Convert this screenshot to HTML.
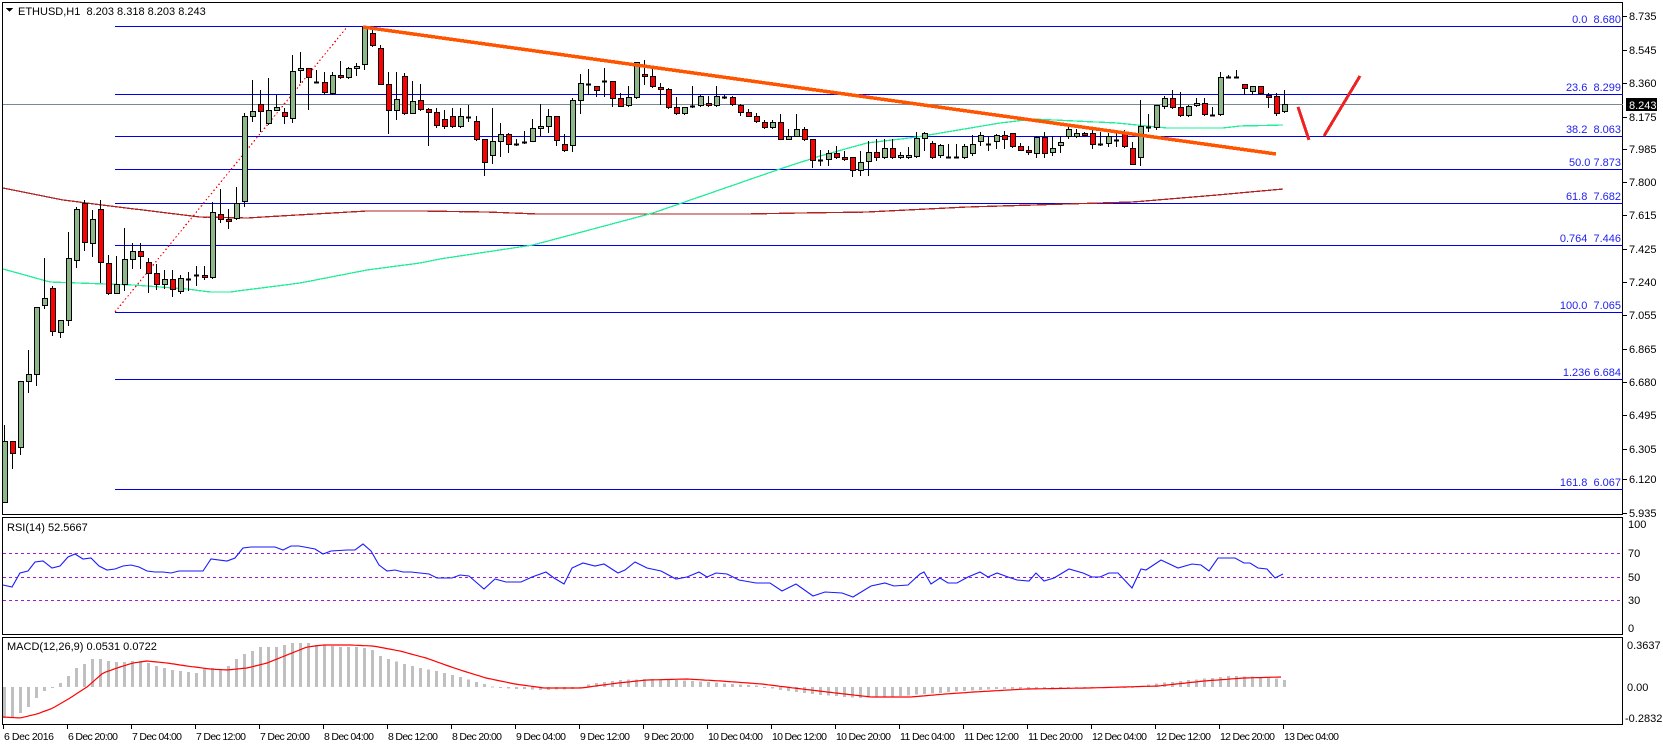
<!DOCTYPE html>
<html><head><meta charset="utf-8">
<style>
html,body{margin:0;padding:0;background:#fff;}
svg{display:block;font-family:"Liberation Sans",sans-serif;font-size:11px;}
.pre text{white-space:pre;}
</style></head><body>
<svg id="s" width="1663" height="746" viewBox="0 0 1663 746" xmlns="http://www.w3.org/2000/svg" shape-rendering="crispEdges">
<rect x="0" y="0" width="1663" height="746" fill="#fff"/>
<rect x="2.5" y="2.5" width="1620" height="512" fill="none" stroke="#000"/>
<rect x="2.5" y="517.5" width="1620" height="117" fill="none" stroke="#000"/>
<rect x="2.5" y="637.5" width="1620" height="87" fill="none" stroke="#000"/>
<g stroke="#0000e6" stroke-width="1.2">
<line x1="115" y1="26.5" x2="1623" y2="26.5"/>
<line x1="115" y1="94.5" x2="1623" y2="94.5"/>
<line x1="115" y1="136.5" x2="1623" y2="136.5"/>
<line x1="115" y1="169.5" x2="1623" y2="169.5"/>
<line x1="115" y1="203.5" x2="1623" y2="203.5"/>
<line x1="115" y1="245.5" x2="1623" y2="245.5"/>
<line x1="115" y1="312.5" x2="1623" y2="312.5"/>
<line x1="115" y1="379.5" x2="1623" y2="379.5"/>
<line x1="115" y1="489.5" x2="1623" y2="489.5"/>
</g>
<line x1="3" y1="104.5" x2="1623" y2="104.5" stroke="#778899"/>
<g fill="#2222ee" text-anchor="end" class="pre" xml:space="preserve">
<text x="1621" y="23">0.0  8.680</text>
<text x="1621" y="91">23.6  8.299</text>
<text x="1621" y="133">38.2  8.063</text>
<text x="1621" y="166">50.0 7.873</text>
<text x="1621" y="200">61.8  7.682</text>
<text x="1621" y="242">0.764  7.446</text>
<text x="1621" y="309">100.0  7.065</text>
<text x="1621" y="376">1.236 6.684</text>
<text x="1621" y="486">161.8  6.067</text>
</g>
<g id="ov"></g>
<polygon points="6,8 13,8 9.5,12" fill="#000"/>
<text x="18" y="15" fill="#000" class="pre" xml:space="preserve">ETHUSD,H1  8.203 8.318 8.203 8.243</text>
<g fill="#000">
<text x="1629" y="20">8.735</text>
<text x="1629" y="54">8.545</text>
<text x="1629" y="87">8.360</text>
<text x="1629" y="121">8.175</text>
<text x="1629" y="153">7.985</text>
<text x="1629" y="186">7.800</text>
<text x="1629" y="219">7.615</text>
<text x="1629" y="253">7.425</text>
<text x="1629" y="286">7.240</text>
<text x="1629" y="319">7.055</text>
<text x="1629" y="353">6.865</text>
<text x="1629" y="386">6.680</text>
<text x="1629" y="419">6.495</text>
<text x="1629" y="453">6.305</text>
<text x="1629" y="483">6.120</text>
<text x="1629" y="517">5.935</text>
</g>
<g stroke="#000">
<line x1="1623" y1="16.5" x2="1627" y2="16.5"/><line x1="1623" y1="50.5" x2="1627" y2="50.5"/><line x1="1623" y1="83.5" x2="1627" y2="83.5"/><line x1="1623" y1="117.5" x2="1627" y2="117.5"/><line x1="1623" y1="149.5" x2="1627" y2="149.5"/><line x1="1623" y1="182.5" x2="1627" y2="182.5"/><line x1="1623" y1="215.5" x2="1627" y2="215.5"/><line x1="1623" y1="249.5" x2="1627" y2="249.5"/><line x1="1623" y1="282.5" x2="1627" y2="282.5"/><line x1="1623" y1="315.5" x2="1627" y2="315.5"/><line x1="1623" y1="349.5" x2="1627" y2="349.5"/><line x1="1623" y1="382.5" x2="1627" y2="382.5"/><line x1="1623" y1="415.5" x2="1627" y2="415.5"/><line x1="1623" y1="449.5" x2="1627" y2="449.5"/><line x1="1623" y1="479.5" x2="1627" y2="479.5"/><line x1="1623" y1="513.5" x2="1627" y2="513.5"/>
</g>
<rect x="1626" y="98" width="31" height="13" fill="#000"/>
<text x="1629" y="109" fill="#fff">8.243</text>
<text x="7" y="531" fill="#000">RSI(14) 52.5667</text>
<g stroke="#9a1ed6" stroke-dasharray="3,3">
<line x1="3" y1="553.5" x2="1623" y2="553.5"/>
<line x1="3" y1="577.5" x2="1623" y2="577.5"/>
<line x1="3" y1="600.5" x2="1623" y2="600.5"/>
</g>
<g fill="#000">
<text x="1628" y="528">100</text>
<text x="1628" y="557">70</text>
<text x="1628" y="581">50</text>
<text x="1628" y="604">30</text>
<text x="1628" y="632">0</text>
<text x="7" y="650">MACD(12,26,9) 0.0531 0.0722</text>
<text x="1627" y="649">0.3637</text>
<text x="1627" y="691">0.00</text>
<text x="1625" y="722">-0.2832</text>
</g>
<g id="ind"></g>
<g fill="#000" font-size="10.5" lengthAdjust="spacingAndGlyphs">
<text x="4" y="740" textLength="50">6 Dec 2016</text>
<text x="68" y="740" textLength="50">6 Dec 20:00</text>
<text x="132" y="740" textLength="50">7 Dec 04:00</text>
<text x="196" y="740" textLength="50">7 Dec 12:00</text>
<text x="260" y="740" textLength="50">7 Dec 20:00</text>
<text x="324" y="740" textLength="50">8 Dec 04:00</text>
<text x="388" y="740" textLength="50">8 Dec 12:00</text>
<text x="452" y="740" textLength="50">8 Dec 20:00</text>
<text x="516" y="740" textLength="50">9 Dec 04:00</text>
<text x="580" y="740" textLength="50">9 Dec 12:00</text>
<text x="644" y="740" textLength="50">9 Dec 20:00</text>
<text x="708" y="740" textLength="55">10 Dec 04:00</text>
<text x="772" y="740" textLength="55">10 Dec 12:00</text>
<text x="836" y="740" textLength="55">10 Dec 20:00</text>
<text x="900" y="740" textLength="55">11 Dec 04:00</text>
<text x="964" y="740" textLength="55">11 Dec 12:00</text>
<text x="1028" y="740" textLength="55">11 Dec 20:00</text>
<text x="1092" y="740" textLength="55">12 Dec 04:00</text>
<text x="1156" y="740" textLength="55">12 Dec 12:00</text>
<text x="1220" y="740" textLength="55">12 Dec 20:00</text>
<text x="1284" y="740" textLength="55">13 Dec 04:00</text>
</g>
<g id="ticks" stroke="#000"></g>
<g id="cd"></g>
<g id="top"></g>
</svg>
<script>
var NS="http://www.w3.org/2000/svg";
function el(p,t,a){var e=document.createElementNS(NS,t);for(var k in a)e.setAttribute(k,a[k]);document.getElementById(p).appendChild(e);return e;}
for(var i=0;i<21;i++){var x=3.5+64*i;el("ticks","line",{x1:x,y1:725,x2:x,y2:729});}
var C=[
["G",441,502,425,502],["R",441,453,441,468],["G",381,447,405,454],["G",374,381,350,392],["G",307,374,355,385],["G",298,305,258,308],["R",288,331,286,335],["G",320,332,320,337],["G",258,320,232,325],["G",209,260,207,267],["R",203,242,200,250],["G",219,243,210,256],["R",209,262,200,282],["R",263,293,255,294],["G",284,293,256,293],["G",259,284,228,290],["G",251,259,243,268],["R",251,256,243,268],["R",262,273,258,292],["R",273,284,264,289],["G",279,284,270,288],["R",279,289,270,296],["G",278,291,275,293],["D",279,279,272,290],["D",275,275,266,285],["R",275,277,266,279],["G",212,277,202,278],["R",214,219,189,222],["R",219,221,209,228],["G",203,218,187,219],["G",116,201,113,206],["G",111,116,80,121],["R",104,111,90,131],["G",110,123,78,124],["G",107,110,95,110],["R",112,116,108,123],["G",71,118,55,122],["G",68,70,52,82],["R",68,77,68,109],["D",82,82,70,82],["R",82,92,72,94],["G",75,93,72,94],["R",75,77,61,78],["G",68,77,67,78],["G",66,68,63,75],["G",27,64,26,69],["R",33,45,28,46],["R",48,84,45,84],["R",84,110,72,133],["G",99,110,72,119],["R",76,113,73,114],["G",101,113,81,113],["R",100,109,84,110],
["R",109,112,108,145],["R",112,125,108,127],["R",119,126,110,128],["R",116,126,108,127],["G",116,126,108,127],["D",117,117,105,121],["R",121,139,116,140],["R",139,162,139,175],["G",141,155,108,163],["G",134,141,123,156],["R",134,144,133,152],["D",144,144,139,145],["D",142,142,131,143],["G",128,141,119,141],["G",126,128,104,135],["G",116,126,109,132],["R",116,140,116,145],["R",144,150,134,151],["G",100,145,98,151],["G",83,100,74,113],["D",84,84,69,94],["R",86,90,86,96],["D",81,81,68,96],["R",81,98,81,106],["R",98,106,93,106],["G",97,105,86,106],["G",62,97,62,98],["R",74,76,60,84],["R",76,86,68,87],["R",87,89,83,104],["R",89,107,88,108],["R",107,113,97,114],["G",107,113,107,114],["D",106,106,86,107],["G",96,105,95,106],["R",103,105,96,106],["G",96,105,86,106],["D",97,97,95,98],["R",97,104,96,105],["R",105,112,104,115],["R",112,116,109,116],["R",116,121,113,122],["R",122,127,120,128],["G",122,127,120,128],["R",122,139,114,139],["G",136,139,129,139],["G",129,136,114,136],["R",129,139,127,140],
["R",139,160,139,167],["D",160,160,150,165],["G",153,159,150,165],["R",153,157,146,158],["R",157,159,151,160],["R",157,170,157,176],["G",162,170,151,175],["G",152,161,141,175],["R",152,157,139,160],["G",148,157,139,158],["R",148,157,139,158],["G",155,157,152,158],["G",155,157,147,158],["G",138,156,132,157],["G",133,138,132,150],["R",143,157,141,158],["G",145,155,144,157],["D",157,157,144,157],["D",157,157,144,157],["G",146,157,144,158],["G",144,153,135,155],["G",135,141,132,145],["D",144,144,136,150],["G",135,141,134,148],["R",135,139,131,148],["R",133,146,133,147],["R",146,150,143,150],["R",150,152,146,154],["G",137,153,136,157],["R",137,153,132,157],["G",148,152,136,155],["G",142,145,136,152],["G",129,136,124,138],["G",133,136,129,137],["R",133,135,132,136],["R",133,144,128,148],["D",144,144,132,145],["G",136,143,133,146],["D",140,140,131,146],["R",133,146,130,147],["R",148,164,142,164],["G",126,157,100,165],["D",127,127,114,131],["G",105,127,105,129],["G",98,106,96,108],["R",98,107,90,108],["R",107,115,92,116],["G",106,115,105,116],["G",103,105,98,106],["R",103,114,98,115],["D",115,115,107,115],["G",77,114,72,115],["D",77,77,75,77],["D",77,77,70,77],["R",84,88,84,94],["G",86,91,86,94],["R",86,93,86,94],["R",95,97,93,107],["R",96,113,93,115],["G",104,111,90,112]
];
for(var i=0;i<C.length;i++){
 var c=C[i],x=4+8*i;
 el("cd","line",{x1:x+0.5,y1:c[3],x2:x+0.5,y2:c[4]+1,stroke:"#000"});
 if(c[0]=="D"){el("cd","line",{x1:x-2,y1:c[1]+0.5,x2:x+3,y2:c[1]+0.5,stroke:"#000","stroke-width":2});}
 else{var h=Math.max(c[2]-c[1],2);el("cd","rect",{x:x-2+0.5,y:c[1]+0.5,width:5,height:h,fill:c[0]=="G"?"#8fb88a":"#ff0000",stroke:"#000"});}
}
function pl(p,pts,a){a.points=pts.map(function(q){return q[0]+","+q[1]}).join(" ");a.fill="none";return el(p,"polyline",a);}
function interp(P,x){if(x<=P[0][0])return P[0][1];for(var i=1;i<P.length;i++){if(x<=P[i][0]){var t=(x-P[i-1][0])/(P[i][0]-P[i-1][0]);return P[i-1][1]+t*(P[i][1]-P[i-1][1]);}}return P[P.length-1][1];}
var GM=[[3,269],[50,282],[133,285],[187,289],[210,292],[230,292],[300,283],[367,270],[420,263],[440,259],[533,245],[653,213],[777,170],[820,156],[867,143],[917,137],[1000,123],[1033,119],[1117,123],[1167,128],[1223,128],[1240,126],[1283,125]];
var BM=[[3,188],[63,200],[110,206],[200,217],[247,218],[280,216],[367,211],[420,211],[487,212],[537,214],[743,214],[800,213],[867,212],[967,207],[1067,204],[1133,202],[1217,195],[1283,189]];
var g=[],b=[];for(var x=3;x<=1283;x+=4){g.push([x,interp(GM,x).toFixed(1)]);b.push([x,interp(BM,x).toFixed(1)]);}
pl("ov",b,{stroke:"#b22222","stroke-width":1.3});
pl("ov",g,{stroke:"#22ee99","stroke-width":1.3});
el("ov","line",{x1:115,y1:312,x2:347,y2:27,stroke:"#ff0000","stroke-dasharray":"1.5,2.5","stroke-width":1.2});
el("top","line",{x1:363,y1:27,x2:1276,y2:154,stroke:"#ff5500","stroke-width":3.5});
el("top","line",{x1:1298,y1:107,x2:1309,y2:140,stroke:"#ee2222","stroke-width":3});
el("top","line",{x1:1324,y1:136,x2:1360,y2:76,stroke:"#ee2222","stroke-width":3});
var R=[[3,585],[12,587],[20,573],[28,571],[35,562],[43,561],[52,568],[60,566],[68,557],[75,554],[83,559],[91,558],[99,566],[107,570],[115,569],[123,566],[131,565],[139,567],[147,571],[155,572],[163,572],[171,573],[179,571],[203,571],[211,559],[227,561],[235,558],[243,548],[251,547],[275,547],[283,550],[291,546],[299,546],[315,549],[323,554],[331,551],[347,550],[355,550],[363,544],[371,551],[379,565],[387,571],[395,570],[403,572],[411,572],[429,574],[437,578],[452,578],[460,575],[469,576],[484,589],[495,579],[506,582],[521,582],[532,577],[546,572],[554,578],[564,584],[572,568],[583,563],[595,566],[604,564],[618,573],[625,570],[635,562],[647,568],[661,571],[676,579],[687,577],[699,572],[707,577],[716,573],[727,574],[739,580],[756,583],[770,583],[782,591],[796,584],[813,596],[825,592],[842,593],[853,597],[871,586],[885,583],[894,586],[908,585],[920,574],[924,572],[931,584],[940,578],[948,583],[957,583],[968,577],[980,572],[988,577],[997,573],[1008,577],[1017,580],[1029,581],[1036,573],[1044,581],[1054,578],[1069,569],[1083,573],[1092,577],[1100,577],[1109,573],[1118,573],[1132,588],[1141,569],[1146,570],[1161,560],[1178,568],[1192,564],[1201,565],[1209,571],[1218,558],[1235,558],[1244,563],[1250,563],[1258,568],[1267,569],[1275,578],[1283,574]];
pl("ind",R,{stroke:"#1a1aff","stroke-width":1.1,"shape-rendering":"auto"});
var H0=[718,718,713,707,698,691,687,683,676,668,664,659,659,661,662,662,661,661,663,666,668,670,671,672,673,668,668,669,666,659,654,651,647,647,647,645,643,643,643,645,645,646,647,647,647,648,650,656];
var HP=[[400,663],[420,668],[440,672],[460,677],[480,683],[490,686],[500,688],[540,690],[575,689],[590,684],[620,680],[650,679],[680,680],[720,683],[760,686],[780,690],[820,695],[860,698],[900,696],[950,692],[1000,689],[1100,688],[1135,687],[1150,684],[1190,680],[1230,676],[1270,677],[1284,680]];
for(var i=0;i<161;i++){var x=4+8*i,v;
 if(i<H0.length)v=H0[i];else if(x<400)v=656+(x-380)/20*7;else v=interp(HP,x);
 var y0=Math.min(v,687),h=Math.abs(v-687);if(h<1)h=1;
 el("ind","rect",{x:x-1,y:y0,width:3,height:h,fill:"#c0c0c0"});}
var S=[[3,717],[20,718],[37,714],[53,708],[70,698],[87,687],[103,673],[120,667],[133,663],[147,661],[167,663],[187,666],[210,669],[227,670],[247,668],[267,663],[287,655],[307,647],[323,645],[350,645],[373,646],[400,651],[426,658],[457,669],[486,678],[515,684],[544,688],[581,688],[618,683],[647,680],[687,679],[721,681],[762,684],[802,689],[836,693],[871,697],[911,697],[945,694],[974,692],[1026,689],[1089,688],[1158,686],[1204,681],[1244,678],[1281,677]];
var s=[];for(var x=3;x<=1283;x+=3)s.push([x,interp(S,x).toFixed(1)]);
pl("ind",s,{stroke:"#ff0000","stroke-width":1.2,"shape-rendering":"auto"});
</script>
</body></html>
